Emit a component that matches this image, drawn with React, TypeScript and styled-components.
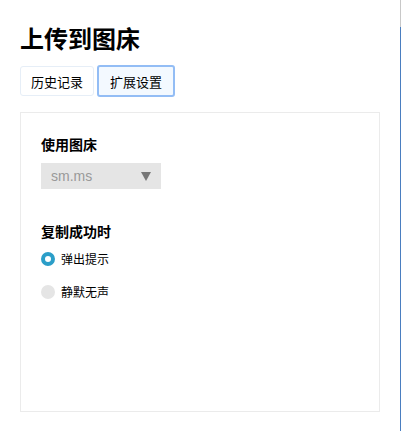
import React, { useState } from "react";
import styled, { createGlobalStyle } from "styled-components";

const Global = createGlobalStyle`
  html, body { margin: 0; padding: 0; background: #fff; }
  body { font-family: "Noto Sans CJK SC", "Noto Sans", sans-serif; color: #000; }
  * { box-sizing: border-box; }
`;

const Page = styled.div`
  width: 401px;
  height: 431px;
  padding: 22px 20px 0 20px;
  border-right: 1px solid transparent;
  border-image: linear-gradient(to bottom, #c8c8c8 0px, #c8c8c8 28px, #4a7ec0 28px, #4a7ec0 100%) 1;
  overflow: hidden;
`;

const Title = styled.h1`
  margin: 0;
  font-size: 24px;
  line-height: 32px;
  font-weight: 700;
`;

const Tabs = styled.div`
  display: flex;
  align-items: center;
  gap: 3px;
  margin-top: 11px;
`;

const Tab = styled.button<{ $active?: boolean }>`
  height: ${(p) => (p.$active ? 32 : 30)}px;
  padding: 0 ${(p) => (p.$active ? 11 : 10)}px;
  font-family: inherit;
  font-size: 13px;
  color: #000;
  border-radius: 3px;
  border: ${(p) => (p.$active ? "2px solid #93bdf5" : "1px solid #e6eef7")};
  background: ${(p) => (p.$active ? "#f3f9ff" : "#fff")};
  cursor: pointer;
`;

const Card = styled.div`
  margin-top: 15px;
  height: 300px;
  border: 1px solid #ebebeb;
  padding: 20px 20px;
`;

const Section = styled.div`
  & + & { margin-top: 31px; }
`;

const Label = styled.div`
  font-size: 14px;
  font-weight: 700;
  line-height: 22px;
`;

const Select = styled.div`
  margin-top: 8px;
  width: 120px;
  height: 26px;
  background: #e5e5e5;
  display: flex;
  align-items: center;
  justify-content: space-between;
  padding: 0 10px 0 10px;
  font-family: "Liberation Sans", Arial, sans-serif;
  font-size: 14px;
  color: #999;
`;

const Caret = styled.span`
  width: 0;
  height: 0;
  border-left: 5px solid transparent;
  border-right: 5px solid transparent;
  border-top: 9px solid #777;
`;

const Radios = styled.div`
  margin-top: 6px;
  display: flex;
  flex-direction: column;
  gap: 12px;
`;

const RadioRow = styled.label`
  display: flex;
  align-items: center;
  gap: 6px;
  font-size: 12px;
  line-height: 21px;
  cursor: pointer;
`;

const Dot = styled.span<{ $on?: boolean }>`
  width: 14px;
  height: 14px;
  border-radius: 50%;
  background: ${(p) => (p.$on ? "#fff" : "#e5e5e5")};
  border: ${(p) => (p.$on ? "4px solid #2b9ec8" : "none")};
`;

export default function App() {
  const [tab, setTab] = useState(1);
  const [mode, setMode] = useState(0);
  return (
    <>
      <Global />
      <Page>
        <Title>上传到图床</Title>
        <Tabs>
          <Tab $active={tab === 0} onClick={() => setTab(0)}>历史记录</Tab>
          <Tab $active={tab === 1} onClick={() => setTab(1)}>扩展设置</Tab>
        </Tabs>
        <Card>
          <Section>
            <Label>使用图床</Label>
            <Select>
              <span>sm.ms</span>
              <Caret />
            </Select>
          </Section>
          <Section>
            <Label>复制成功时</Label>
            <Radios>
              {["弹出提示", "静默无声"].map((t, i) => (
                <RadioRow key={t} onClick={() => setMode(i)}>
                  <Dot $on={mode === i} />
                  {t}
                </RadioRow>
              ))}
            </Radios>
          </Section>
        </Card>
      </Page>
    </>
  );
}
